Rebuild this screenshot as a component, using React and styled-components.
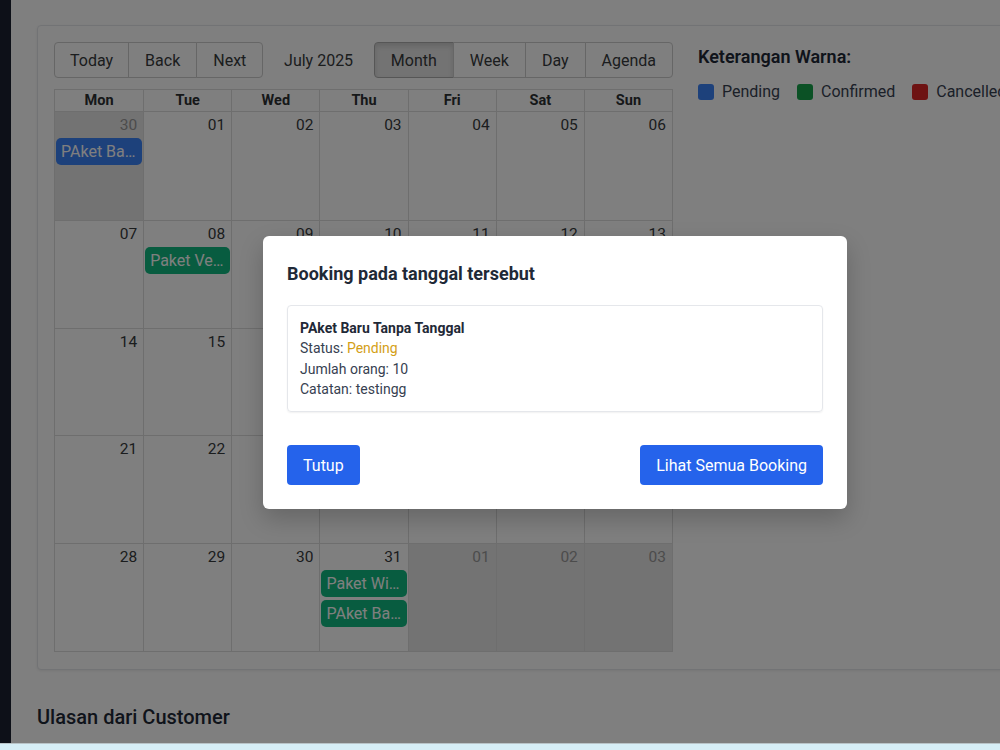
import React from 'react';
import styled, { createGlobalStyle } from 'styled-components';

const GlobalStyle = createGlobalStyle`
	html, body {
		margin: 0;
		padding: 0;
		overflow: hidden;
		background: #d6eef6;
	}
	body {
		font-family: Roboto, "Noto Sans", Arial, sans-serif;
		color: #373a3c;
	}
`;

const Screen = styled.div`
	position: relative;
	height: 743px;
	display: flex;
	overflow: hidden;
	background: #ffffff;
	border-bottom: 1px solid #b9c4c8;
`;

const Sidebar = styled.aside`
	width: 11px;
	flex-shrink: 0;
	background: #1a2130;
`;

const Main = styled.main`
	flex: 1;
	padding: 25px 0 0 26px;
	min-width: 1100px;
`;

const Card = styled.section`
	display: flex;
	gap: 25px;
	padding: 16px 16px 17px 16px;
	border: 1px solid #e5e7eb;
	border-radius: 4px;
	box-shadow: 0 1px 3px rgba(0, 0, 0, 0.08);
	background: #fff;
`;

const Calendar = styled.div`
	width: 619px;
	flex-shrink: 0;
	display: flex;
	flex-direction: column;
	gap: 11px;
`;

const Toolbar = styled.div`
	display: flex;
	align-items: center;
	height: 36px;
`;

const BtnGroup = styled.div`
	display: flex;
`;

const ToolBtn = styled.button`
	font-family: inherit;
	font-size: 16px;
	color: #373a3c;
	height: 36px;
	padding: 0 ${(p) => p.$px || 16}px;
	background: ${(p) => (p.$active ? '#e6e6e6' : '#fff')};
	border: 1px solid ${(p) => (p.$active ? '#adadad' : '#ccc')};
	box-shadow: ${(p) => (p.$active ? 'inset 0 3px 5px rgba(0,0,0,0.125)' : 'none')};
	margin-left: -1px;
	border-radius: 0;
	&:first-child {
		margin-left: 0;
		border-radius: 4px 0 0 4px;
	}
	&:last-child {
		border-radius: 0 4px 4px 0;
	}
`;

const Label = styled.span`
	flex: 1;
	text-align: center;
	font-size: 16px;
	color: #373a3c;
`;

const Month = styled.div`
	border: 1px solid #ddd;
	display: grid;
	grid-template-columns: repeat(7, 1fr);
	grid-template-rows: 22px repeat(5, 1fr);
	height: 561px;
`;

const HeadCell = styled.div`
	font-weight: 700;
	font-size: 14.5px;
	text-align: center;
	line-height: 22px;
	color: #2d3033;
	border-bottom: 1px solid #ddd;
	border-left: ${(p) => (p.$first ? 'none' : '1px solid #ddd')};
`;

const DayCell = styled.div`
	min-width: 0;
	background: ${(p) => (p.$off ? '#e6e6e6' : '#fff')};
	border-left: ${(p) => (p.$first ? 'none' : '1px solid #ddd')};
	border-top: ${(p) => (p.$topRow ? 'none' : '1px solid #ddd')};
	display: flex;
	flex-direction: column;
	padding: 0 1px;
`;

const DateNum = styled.div`
	text-align: right;
	padding: 2px 5px 0 0;
	font-size: 15.5px;
	line-height: 22px;
	color: ${(p) => (p.$off ? '#999' : '#373a3c')};
`;

const EventChip = styled.div`
	margin: 2px 0 1px;
	height: 27px;
	line-height: 27px;
	padding: 0 5px;
	border-radius: 5px;
	font-size: 16px;
	color: #fff;
	background: ${(p) => p.$color};
	white-space: nowrap;
	overflow: hidden;
	text-overflow: ellipsis;
`;

const Legend = styled.div`
	padding-top: 2px;
`;

const LegendTitle = styled.h3`
	margin: 0 0 12px;
	font-size: 18px;
	font-weight: 600;
	line-height: 26px;
	color: #1f2937;
`;

const LegendRow = styled.div`
	display: flex;
	align-items: center;
	gap: 17px;
	white-space: nowrap;
`;

const LegendItem = styled.span`
	display: flex;
	align-items: center;
	gap: 8px;
	font-size: 16px;
	color: #374151;
`;

const Swatch = styled.span`
	width: 16px;
	height: 16px;
	border-radius: 3px;
	background: ${(p) => p.$color};
`;

const SectionTitle = styled.h2`
	margin: 33px 0 0;
	font-size: 20px;
	font-weight: 500;
	line-height: 28px;
	color: #1f2937;
`;

const Overlay = styled.div`
	position: absolute;
	inset: 0;
	background: rgba(0, 0, 0, 0.5);
	display: flex;
	align-items: flex-start;
	justify-content: center;
	padding-top: 236px;
	padding-left: 110px;
	z-index: 10;
`;

const Modal = styled.div`
	width: 536px;
	background: #fff;
	border-radius: 6px;
	padding: 24px;
	box-shadow: 0 10px 25px rgba(0, 0, 0, 0.2);
`;

const ModalTitle = styled.h3`
	margin: 0 0 17px;
	font-size: 18px;
	font-weight: 700;
	line-height: 28px;
	color: #1f2937;
`;

const BookingBox = styled.div`
	border: 1px solid #e5e7eb;
	border-radius: 4px;
	padding: 12px 12px;
	box-shadow: 0 1px 2px rgba(0, 0, 0, 0.06);
	font-size: 14px;
	line-height: 20.3px;
	color: #374151;
`;

const BookingName = styled.div`
	font-weight: 700;
	color: #1f2937;
`;

const StatusText = styled.span`
	color: #d4a017;
`;

const Actions = styled.div`
	display: flex;
	justify-content: space-between;
	margin-top: 33px;
`;

const PrimaryBtn = styled.button`
	font-family: inherit;
	font-size: 16px;
	color: #fff;
	background: #2563eb;
	border: none;
	border-radius: 4px;
	height: 40px;
	padding: 0 16px;
`;

const weeks = [
	['30', '01', '02', '03', '04', '05', '06'],
	['07', '08', '09', '10', '11', '12', '13'],
	['14', '15', '16', '17', '18', '19', '20'],
	['21', '22', '23', '24', '25', '26', '27'],
	['28', '29', '30', '31', '01', '02', '03'],
];

const events = {
	'0-0': [{ title: 'PAket Baru Tanpa Tanggal', color: '#3b82f6' }],
	'1-1': [{ title: 'Paket Venus', color: '#10b981' }],
	'4-3': [
		{ title: 'Paket Wisata', color: '#10b981' },
		{ title: 'PAket Baru', color: '#10b981' },
	],
};

const isOff = (w, d) => (w === 0 && d === 0) || (w === 4 && d >= 4);

const App = () => (
	<>
		<GlobalStyle />
		<Screen>
			<Sidebar />
			<Main>
				<Card>
					<Calendar>
						<Toolbar>
							<BtnGroup>
								<ToolBtn $px={15}>Today</ToolBtn>
								<ToolBtn $px={16}>Back</ToolBtn>
								<ToolBtn $px={16}>Next</ToolBtn>
							</BtnGroup>
							<Label>July 2025</Label>
							<BtnGroup>
								<ToolBtn $active>Month</ToolBtn>
								<ToolBtn>Week</ToolBtn>
								<ToolBtn>Day</ToolBtn>
								<ToolBtn>Agenda</ToolBtn>
							</BtnGroup>
						</Toolbar>
						<Month>
							{['Mon', 'Tue', 'Wed', 'Thu', 'Fri', 'Sat', 'Sun'].map((d, i) => (
								<HeadCell key={d} $first={i === 0}>
									{d}
								</HeadCell>
							))}
							{weeks.map((week, w) =>
								week.map((day, d) => (
									<DayCell key={`${w}-${d}`} $off={isOff(w, d)} $first={d === 0} $topRow={w === 0}>
										<DateNum $off={isOff(w, d)}>{day}</DateNum>
										{(events[`${w}-${d}`] || []).map((ev) => (
											<EventChip key={ev.title} $color={ev.color}>
												{ev.title}
											</EventChip>
										))}
									</DayCell>
								))
							)}
						</Month>
					</Calendar>
					<Legend>
						<LegendTitle>Keterangan Warna:</LegendTitle>
						<LegendRow>
							<LegendItem>
								<Swatch $color="#3b82f6" />
								Pending
							</LegendItem>
							<LegendItem>
								<Swatch $color="#16a34a" />
								Confirmed
							</LegendItem>
							<LegendItem>
								<Swatch $color="#dc2626" />
								Cancelled
							</LegendItem>
						</LegendRow>
					</Legend>
				</Card>
				<SectionTitle>Ulasan dari Customer</SectionTitle>
			</Main>
			<Overlay>
				<Modal>
					<ModalTitle>Booking pada tanggal tersebut</ModalTitle>
					<BookingBox>
						<BookingName>PAket Baru Tanpa Tanggal</BookingName>
						<div>
							Status: <StatusText>Pending</StatusText>
						</div>
						<div>Jumlah orang: 10</div>
						<div>Catatan: testingg</div>
					</BookingBox>
					<Actions>
						<PrimaryBtn>Tutup</PrimaryBtn>
						<PrimaryBtn>Lihat Semua Booking</PrimaryBtn>
					</Actions>
				</Modal>
			</Overlay>
		</Screen>
	</>
);

export default App;
